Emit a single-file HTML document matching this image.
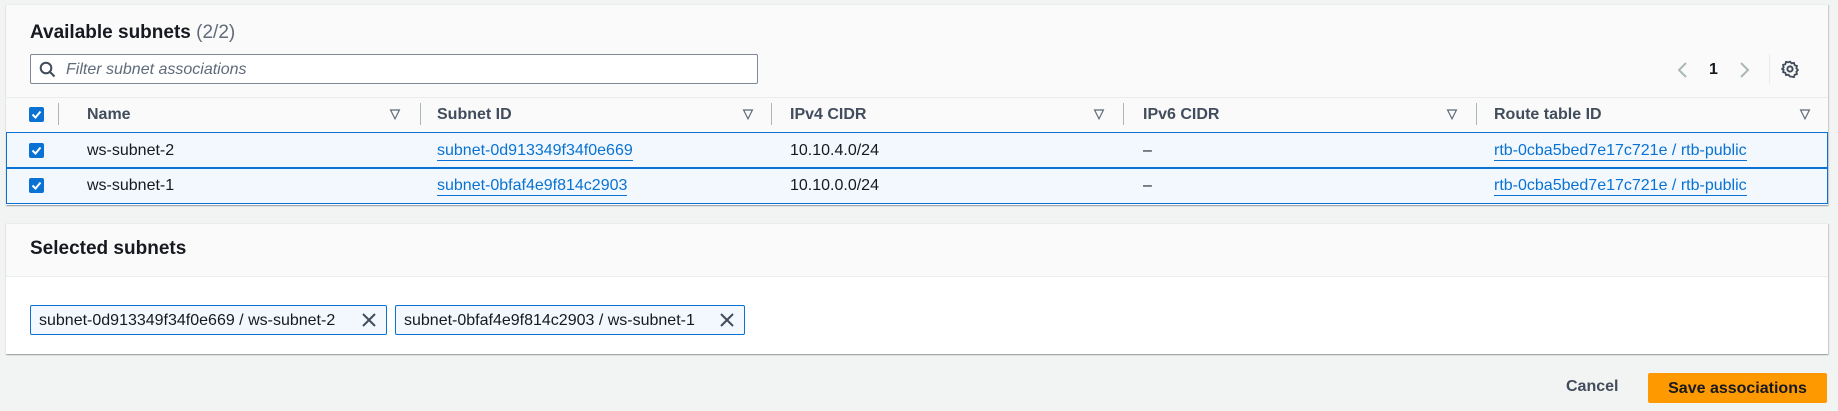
<!DOCTYPE html>
<html><head><style>
*{box-sizing:border-box;margin:0;padding:0}
body{width:1838px;height:411px;background:#f2f3f3;font-family:"Liberation Sans",sans-serif;color:#16191f;position:relative;overflow:hidden;font-size:16px}
.abs{position:absolute}
.panel{position:absolute;left:6px;width:1822px;background:#fff;box-shadow:0 1px 1px rgba(0,28,36,.3),1px 1px 1px rgba(0,28,36,.15);border-top:1px solid #eaeded}
.h{font-weight:bold;font-size:19px;color:#16191f}
.cb{position:absolute;width:15px;height:15px;background:#0972d3;border-radius:2px}
.cb svg{position:absolute;left:0;top:0}
.th{position:absolute;top:106px;font-weight:bold;color:#414d5c;font-size:16px}
.tri{position:absolute;top:106px;color:#5f6b7a;font-size:13px;font-weight:bold}
.sep{position:absolute;top:103px;width:1px;height:22px;background:#aab7b8}
.row{position:absolute;left:6px;width:1822px;height:36px;background:#f2f8fd;border:1px solid #0972d3}
.t{position:absolute;font-size:16px}
a{color:#0972d3;text-decoration:none;border-bottom:1px solid #0972d3;padding-bottom:1px}
.tok{position:absolute;top:305px;height:30px;border:1px solid #0972d3;background:#f2f8fd;border-radius:2px;font-size:16px;padding:6px 0 0 8px;color:#16191f}
.tok svg{position:absolute;right:10px;top:7px}
</style></head><body>
<div class="panel" style="top:4px;height:201px;background:#fafafa"></div>
<div class="abs" style="left:6px;top:97px;width:1822px;height:35px;background:#fafafa;border-top:1px solid #eaeded"></div>
<div class="abs h" style="left:30px;top:22px">Available subnets <span style="font-weight:normal;color:#5f6b7a">(2/2)</span></div>
<div class="abs" style="left:30px;top:54px;width:728px;height:30px;border:1px solid #7d8998;border-radius:2px;background:#fff"></div>
<svg class="abs" style="left:39px;top:61px" width="17" height="17" viewBox="0 0 17 17"><circle cx="7" cy="7" r="5.3" fill="none" stroke="#414d5c" stroke-width="2"/><path d="M11 11l4.5 4.5" stroke="#414d5c" stroke-width="2"/></svg>
<div class="abs" style="left:66px;top:61px;font-style:italic;color:#5f6b7a;font-size:16px">Filter subnet associations</div>
<svg class="abs" style="left:1676px;top:61px" width="12" height="18"><path d="M10 2L3 9l7 7" fill="none" stroke="#aab7b8" stroke-width="2"/></svg>
<div class="abs" style="left:1709px;top:61px;font-weight:bold;font-size:16px">1</div>
<svg class="abs" style="left:1739px;top:61px" width="12" height="18"><path d="M2 2l7 7-7 7" fill="none" stroke="#aab7b8" stroke-width="2"/></svg>
<div class="abs" style="left:1769px;top:54px;width:1px;height:30px;background:#e9ebed"></div>
<svg class="abs" style="left:1781px;top:60px" width="18" height="18" viewBox="0 0 18 18"><circle cx="9" cy="9" r="2.6" fill="none" stroke="#414d5c" stroke-width="2"/><path d="M9 1.5l1.6 1.9 2.4-.6.6 2.4 2.4.7-.7 2.4 1.7 1.7-1.7 1.7.7 2.4-2.4.7-.6 2.4-2.4-.6L9 16.5l-1.6-1.9-2.4.6-.6-2.4-2.4-.7.7-2.4L1 9l1.7-1.7L2 4.9l2.4-.7.6-2.4 2.4.6z" fill="none" stroke="#414d5c" stroke-width="1.8" stroke-linejoin="round"/></svg>
<div class="cb" style="left:29px;top:107px"><svg width="15" height="15"><path d="M3.5 7.5l3 3 5-6" fill="none" stroke="#fff" stroke-width="2"/></svg></div>
<div class="sep" style="left:58px"></div>
<div class="th" style="left:87px">Name</div><div class="tri" style="left:390px">▽</div><div class="sep" style="left:420px"></div>
<div class="th" style="left:437px">Subnet ID</div><div class="tri" style="left:743px">▽</div><div class="sep" style="left:771px"></div>
<div class="th" style="left:790px">IPv4 CIDR</div><div class="tri" style="left:1094px">▽</div><div class="sep" style="left:1123px"></div>
<div class="th" style="left:1143px">IPv6 CIDR</div><div class="tri" style="left:1447px">▽</div><div class="sep" style="left:1476px"></div>
<div class="th" style="left:1494px">Route table ID</div><div class="tri" style="left:1800px">▽</div>
<div class="row" style="top:132px"></div>
<div class="row" style="top:168px"></div>
<div class="cb" style="left:29px;top:143px"><svg width="15" height="15"><path d="M3.5 7.5l3 3 5-6" fill="none" stroke="#fff" stroke-width="2"/></svg></div>
<div class="t" style="left:87px;top:142px">ws-subnet-2</div>
<div class="t" style="left:437px;top:142px"><a>subnet-0d913349f34f0e669</a></div>
<div class="t" style="left:790px;top:142px">10.10.4.0/24</div>
<div class="t" style="left:1143px;top:142px">–</div>
<div class="t" style="left:1494px;top:142px"><a>rtb-0cba5bed7e17c721e / rtb-public</a></div>
<div class="cb" style="left:29px;top:178px"><svg width="15" height="15"><path d="M3.5 7.5l3 3 5-6" fill="none" stroke="#fff" stroke-width="2"/></svg></div>
<div class="t" style="left:87px;top:177px">ws-subnet-1</div>
<div class="t" style="left:437px;top:177px"><a>subnet-0bfaf4e9f814c2903</a></div>
<div class="t" style="left:790px;top:177px">10.10.0.0/24</div>
<div class="t" style="left:1143px;top:177px">–</div>
<div class="t" style="left:1494px;top:177px"><a>rtb-0cba5bed7e17c721e / rtb-public</a></div>

<div class="panel" style="top:223px;height:131px"></div>
<div class="abs" style="left:6px;top:224px;width:1822px;height:53px;background:#fafafa;border-bottom:1px solid #eaeded"></div>
<div class="abs h" style="left:30px;top:238px">Selected subnets</div>
<div class="tok" style="left:30px;width:357px">subnet-0d913349f34f0e669 / ws-subnet-2<svg width="14" height="14"><path d="M1 1l12 12M13 1L1 13" stroke="#414d5c" stroke-width="2"/></svg></div>
<div class="tok" style="left:395px;width:350px">subnet-0bfaf4e9f814c2903 / ws-subnet-1<svg width="14" height="14"><path d="M1 1l12 12M13 1L1 13" stroke="#414d5c" stroke-width="2"/></svg></div>

<div class="abs" style="left:1566px;top:378px;font-weight:bold;color:#414d5c;font-size:16px">Cancel</div>
<div class="abs" style="left:1648px;top:373px;width:179px;height:30px;background:#ff9900;border-radius:2px;font-weight:bold;font-size:16px;text-align:center;padding-top:7px;color:#16191f">Save associations</div>
</body></html>
